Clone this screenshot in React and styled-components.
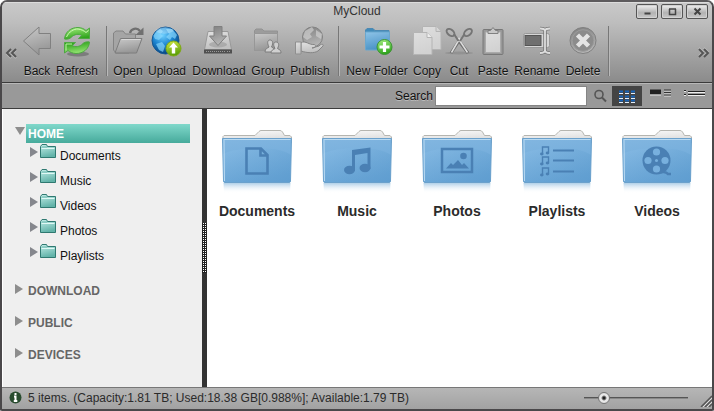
import React, { useState } from 'react';
import styled, { createGlobalStyle } from 'styled-components';

const GlobalStyle = createGlobalStyle`
  * { box-sizing: border-box; }
  body {
    margin: 0;
    background: #fff;
    font-family: "Liberation Sans", Arial, sans-serif;
    font-size: 12px;
    color: #111;
  }
  button, input {
    margin: 0;
    padding: 0;
    border: 0;
    font: inherit;
    color: inherit;
    background: none;
  }
  svg { display: block; flex-shrink: 0; }
`;

/* ---------- Window frame ---------- */

const Window = styled.div`
  display: flex;
  flex-direction: column;
  min-height: 100vh;
  border: 2px solid #4a484a;
  border-top-color: #5d5b5d;
  border-radius: 7px 7px 2px 2px;
  background: #999;
  overflow: hidden;
`;

const Header = styled.header`
  background: linear-gradient(#c9c9c9 0, #bebebe 20px, #8b8b8b 100%);
  border-bottom: 1px solid #3a3a3a;
  box-shadow: inset 0 1px 0 #dcdcdc;
`;

const TitleBar = styled.div`
  display: grid;
  grid-template-columns: 1fr auto 1fr;
  align-items: end;
  height: 18px;
  padding: 0 4px 1px;
`;

const Title = styled.h1`
  grid-column: 2;
  margin: 0;
  font-size: 12px;
  font-weight: 400;
  line-height: 16px;
  color: #333;
`;

const WindowControls = styled.div`
  display: flex;
  justify-content: flex-end;
  gap: 3px;
`;

const ControlButton = styled.button`
  display: grid;
  place-items: center;
  width: 22px;
  height: 15px;
  border: 1px solid #555;
  border-radius: 2px;
  background: linear-gradient(#f0f0f0, #b2b2b2 60%, #c8c8c8);
  box-shadow: inset 0 0 0 1px #d2d2d2;
`;

/* ---------- Toolbar ---------- */

const Toolbar = styled.div`
  display: flex;
  align-items: center;
  height: 62px;
  padding: 0 2px 0 3px;
`;

const ScrollButton = styled.button`
  display: grid;
  place-items: center;
  width: 12px;
  height: 20px;
  margin-top: 4px;
`;

const ToolGroup = styled.div`
  display: flex;
  gap: 4px;
  padding: 0 7px 0 6px;
  border-right: 1px solid #777;
  box-shadow: 1px 0 0 #b9b9b9;
  height: 50px;
`;

const Spacer = styled.div`
  flex: 1;
`;

const ToolButton = styled.button`
  display: flex;
  flex-direction: column;
  align-items: center;
  width: ${(p) => p.$width}px;
  margin-top: -1px;
  white-space: nowrap;
`;

const ToolLabel = styled.span`
  display: flex;
  justify-content: center;
  margin-top: 7px;
  line-height: 14px;
  text-shadow: 0 1px 0 #bbb;
`;

/* ---------- Search bar ---------- */

const SearchBar = styled.form`
  display: flex;
  align-items: center;
  justify-content: flex-end;
  height: 26px;
  padding-right: 2px;
  border-top: 1px solid #b8b8b8;
  border-bottom: 1px solid #3c3c3c;
  background: #999;
`;

const SearchLabel = styled.label`
  margin-right: 2px;
  text-shadow: 0 1px 0 #bbb;
`;

const SearchInput = styled.input`
  width: 152px;
  height: 20px;
  padding: 0 4px;
  border: 1px solid #858585;
  background: #fff;
`;

const SearchButton = styled.button`
  display: grid;
  place-items: center;
  width: 25px;
  height: 20px;
`;

const ViewModes = styled.div`
  display: flex;
  gap: 4px;
`;

const ViewButton = styled.button`
  display: grid;
  place-items: center;
  width: 30px;
  height: 20px;
  background: ${(p) => (p.$active ? '#444' : 'none')};
`;

/* ---------- Body ---------- */

const Body = styled.div`
  display: flex;
  flex: 1;
`;

const Sidebar = styled.nav`
  width: 200px;
  padding: 15px 12px 0 12px;
  background: #efefef;
  border-left: 1px solid #fff;
`;

const Section = styled.section`
  margin-bottom: 12px;
`;

const SectionHead = styled.button`
  display: flex;
  align-items: flex-start;
  width: 100%;
  height: 20px;
  text-align: left;
`;

const Arrow = styled.span`
  width: ${(p) => (p.$section ? 11 : 10)}px;
  padding-top: 3px;
`;

const SectionTitle = styled.span`
  flex: 1;
  height: 19px;
  padding-left: 2px;
  font-size: 12px;
  font-weight: 700;
  line-height: 20px;
  color: ${(p) => (p.$active ? '#fff' : '#666')};
  background: ${(p) => (p.$active ? 'linear-gradient(#80d8cb, #46aa9b)' : 'none')};
`;

const Tree = styled.ul`
  margin: 0;
  padding: 0 0 0 15px;
  list-style: none;
`;

const TreeItem = styled.button`
  display: flex;
  align-items: flex-start;
  width: 100%;
  height: 25px;
  text-align: left;
`;

const TreeLabel = styled.span`
  margin-left: 4px;
  line-height: 24px;
`;

const Splitter = styled.div`
  display: flex;
  align-items: center;
  width: 5px;
  background: #333;
  cursor: col-resize;
`;

const SplitterGrip = styled.div`
  width: 5px;
  height: 50px;
  background: conic-gradient(#fff 25%, #222 0) 0 0 / 2px 2px;
`;

const Content = styled.main`
  flex: 1;
  display: grid;
  grid-template-columns: repeat(auto-fill, 100px);
  align-content: start;
  padding-top: 20px;
  background: #fff;
`;

const FolderTile = styled.button`
  display: flex;
  flex-direction: column;
  align-items: center;
  height: 100px;
  font-size: 14px;
  font-weight: 700;
  line-height: 16px;
  color: #2b2b2b;
`;

const TileLabel = styled.span`
  margin-top: 8px;
`;

/* ---------- Status bar ---------- */

const StatusBar = styled.footer`
  display: flex;
  align-items: center;
  height: 22px;
  padding: 0 0 2px 7px;
  border-top: 1px solid #777;
  background: linear-gradient(#b6b6b6, #a2a2a2);
  color: #2b2b2b;
`;

const StatusText = styled.span`
  flex: 1;
  margin-left: 6px;
`;

const ZoomSlider = styled.input`
  appearance: none;
  width: 104px;
  height: 14px;
  margin-right: 12px;
  &::-webkit-slider-runnable-track {
    height: 2px;
    background: #555;
    border-bottom: 1px solid #888;
  }
  &::-webkit-slider-thumb {
    appearance: none;
    width: 12px;
    height: 12px;
    margin-top: -5px;
    border: 1px solid #777;
    border-radius: 50%;
    background: radial-gradient(circle, #222 0 1px, #eee 3px, #ddd 5px);
  }
`;

/* ---------- Drawings ---------- */

const Gradient = ({ id, from, to }) => (
  <linearGradient id={id} x1="0" y1="0" x2="0.3" y2="1">
    <stop offset="0" stopColor={from} />
    <stop offset="1" stopColor={to} />
  </linearGradient>
);

const Gradients = () => (
  <svg width="0" height="0" aria-hidden="true">
    <defs>
      <Gradient id="grey" from="#c9c9c9" to="#979797" />
      <Gradient id="silver" from="#e2e2e2" to="#c0c0c0" />
      <Gradient id="sheet" from="#dedede" to="#d2d2d2" />
      <Gradient id="steel" from="#7f7f7f" to="#b5b5b5" />
      <Gradient id="green" from="#a9f084" to="#31a51d" />
      <Gradient id="lime" from="#d9ec45" to="#5b9f08" />
      <Gradient id="sky" from="#8fc4e8" to="#4a93c6" />
      <Gradient id="teal" from="#c4eee9" to="#62b3a9" />
      <Gradient id="paper" from="#fbfbfb" to="#d9d9d9" />
      <Gradient id="folderBlue" from="#82b6e0" to="#6ea9d9" />
      <linearGradient id="gloss" x1="0" y1="0" x2="1" y2="1">
        <stop offset="0" stopColor="#8fc2ea" stopOpacity="0.4" />
        <stop offset="1" stopColor="#3c82bb" stopOpacity="0.3" />
      </linearGradient>
      <linearGradient id="reflection" x1="0" y1="0" x2="0" y2="1">
        <stop offset="0" stopColor="#9cc3e2" stopOpacity="0.8" />
        <stop offset="1" stopColor="#fff" stopOpacity="0" />
      </linearGradient>
      <radialGradient id="globe" cx="0.4" cy="0.3" r="0.7">
        <stop offset="0" stopColor="#6fd0ff" />
        <stop offset="0.55" stopColor="#1b83cf" />
        <stop offset="1" stopColor="#07437f" />
      </radialGradient>
    </defs>
  </svg>
);

const refreshArrow =
  'M4.5 14C5 7 11 2.4 18 2.5C21.5 2.6 24.3 4 26 5.5L29.5 3V13.5H18.5L21.8 10.4C19 8.6 14 9.2 11.6 12C9.7 14 7 14.5 4.5 14Z';

const toolDrawings = {
  Back: (
    <path d="M3.5 16L19 2V8.5H30.500V23.500H19V30Z" fill="url(#grey)" stroke="#808080" />
  ),
  Refresh: (
    <>
      <ellipse cx="18" cy="29" rx="11" ry="2.500" fill="#555" opacity="0.5" />
      <path d={refreshArrow} fill="url(#green)" stroke="#4fa843" />
      <path d={refreshArrow} fill="url(#green)" stroke="#4fa843" transform="rotate(180 17 15.500)" />
      <path d="M6.500 12C9 6.500 14 3.800 18 4C22 4.500 24 6 26 7.500L28.500 5.500" fill="none" stroke="#cbf8b4" />
      <path d="M6 25.500V19H12" fill="none" stroke="#bdf4a5" />
    </>
  ),
  Open: (
    <>
      <path d="M2.500 25V8L5 6H12L14.500 9H24.500V14L18 28H5Z" fill="#a5a5a5" stroke="#848484" />
      <path d="M9.500 13.500H31L25.500 28H4Z" fill="url(#grey)" stroke="#7c7c7c" />
      <path d="M10.500 14.500H29.500" stroke="#d8d8d8" />
      <path d="M19 8C20 3.500 26 2 29 6" fill="none" stroke="#707070" strokeWidth="2.400" />
      <path d="M32.500 2.500V10H24.500Z" fill="#707070" />
    </>
  ),
  Upload: (
    <>
      <circle cx="15.500" cy="15.500" r="13.500" fill="url(#globe)" stroke="#155894" />
      <path d="M5 8L10 4L13 6L11 9L13 11L9 15L5 14L3.500 11ZM16 4L22 4L27 10L25 14L22 12L20 15L16 12L19 9ZM6 19L12 17L15 21L13 27L9 25Z" fill="#8fdcff" opacity="0.65" />
      <path d="M5 6C10 1 20 1 24 6C19 9 11 10 5 6" fill="#fff" opacity="0.25" />
      <circle cx="23.500" cy="23.500" r="7.500" fill="url(#lime)" stroke="#7fa818" />
      <path d="M23.500 17.500L28 22.500H25.200V28.500H21.800V22.500H19Z" fill="#fff" />
    </>
  ),
  Download: (
    <>
      <path d="M6 6.500H26L29.500 24.500H2.500Z" fill="url(#silver)" stroke="#999" />
      <path d="M2 24.500H30V28.500H2Z" fill="#505050" />
      <path d="M4 26.500H23M25 26.500H28" stroke="#999" strokeDasharray="1 1" />
      <ellipse cx="16" cy="19.500" rx="9" ry="3" fill="#999" opacity="0.6" />
      <path d="M12 1.500H20V11H24.500L16 20.500L7.500 11H12Z" fill="url(#steel)" stroke="#808080" />
    </>
  ),
  Group: (
    <>
      <path d="M3.500 25.500V5.500L5 4H11L13 6H26.500V25.500Z" fill="#9c9c9c" stroke="#929292" />
      <path d="M3.500 8.500H26.500V25.500H3.500Z" fill="url(#grey)" stroke="#979797" />
      <g fill="#d0d0d0" stroke="#7c7c7c">
        <path d="M14 27C14 23.500 16 23.500 18 22C15.500 17 17 15 19 15S23 17 20.500 22C23 23.500 24 24 24 27Z" />
        <path d="M20 28C20 25 22 25 24 23.500C21.500 19 23 17 25 17S29 19 26.500 23.500C29 25 30 25 30 28Z" />
      </g>
    </>
  ),
  Publish: (
    <>
      <circle cx="19.500" cy="12" r="10" fill="url(#steel)" stroke="#828282" />
      <path d="M12 6L19 2L21 5L17 9L19 12L14 15L10 12ZM23 5L29 9L28 14L23 11Z" fill="#d3d3d3" opacity="0.65" />
      <path d="M8 17.500C13 15.500 16 20 21 19.500C24 20 23 23 19 23L26 21C28 18.500 31 19 30 21L25 26C21 28.500 14 28 8 26Z" fill="url(#silver)" stroke="#858585" />
      <path d="M2.500 17H8V29H2.500Z" fill="url(#silver)" stroke="#8f8f8f" />
    </>
  ),
  'New Folder': (
    <>
      <path d="M5.500 24.500V5L7 3.500H13L15 5.500H29V24.500Z" fill="#438bb9" stroke="#4c89b3" />
      <path d="M5.500 7H29.500V25H5.500Z" fill="url(#sky)" stroke="#6ba7cd" />
      <circle cx="24.500" cy="22" r="7.500" fill="url(#green)" stroke="#3c9433" />
      <path d="M24.500 17V27M19.500 22H29.500" stroke="#fff" strokeWidth="3.200" />
    </>
  ),
  Copy: (
    <g fill="url(#sheet)" stroke="#b4b4b4">
      <path d="M12.500 1.500H26L31 6.500V24.500H12.500Z" />
      <path d="M26 1.500V6.500H31" />
      <path d="M3.500 7.500H17L22 12.500V29.500H3.500Z" />
      <path d="M17 7.500V12.500H22" fill="#eee" />
    </g>
  ),
  Cut: (
    <>
      <ellipse cx="17" cy="28" rx="14" ry="1.500" fill="#777" opacity="0.4" />
      <path d="M17 16L26 28M17 16L9 28" stroke="#6e6e6e" strokeWidth="3" />
      <path d="M16 13L25.500 27.500M18 13L9.500 27.500" stroke="#dcdcdc" strokeWidth="1.500" />
      <g fill="none" stroke="#757575" strokeWidth="2">
        <ellipse cx="8.500" cy="7.500" rx="4.500" ry="2.800" transform="rotate(40 8.500 7.500)" />
        <ellipse cx="26" cy="7.500" rx="4.500" ry="2.800" transform="rotate(-40 26 7.500)" />
        <path d="M12 9L16.500 16M22.500 9L18 16" />
      </g>
    </>
  ),
  Paste: (
    <>
      <rect x="7" y="4.500" width="20" height="25" rx="1" fill="#999" stroke="#787878" />
      <path d="M9.500 7H24.500V27.500H9.500Z" fill="url(#sheet)" stroke="#aaa" />
      <path d="M12 8.500V5.500H14.500L17 2.500L19.500 5.500H22V8.500Z" fill="#c8c8c8" stroke="#808080" />
    </>
  ),
  Rename: (
    <>
      <rect x="3.500" y="8.500" width="26" height="14" rx="2" fill="#d6d6d6" stroke="#999" />
      <rect x="5" y="10.500" width="16" height="10" fill="#707070" stroke="#555" />
      <path d="M20 3.500C23 3.500 25 4 25 6V25C25 27 23 28 20 28M30 3.500C27 3.500 25 4 25 6V25C25 27 27 28 30 28" fill="none" stroke="#777" strokeWidth="3.500" />
      <path d="M20 3.500C23 3.500 25 4 25 6V25C25 27 23 28 20 28M30 3.500C27 3.500 25 4 25 6V25C25 27 27 28 30 28" fill="none" stroke="#ddd" strokeWidth="1.800" />
    </>
  ),
  Delete: (
    <>
      <circle cx="17" cy="15.500" r="13" fill="url(#steel)" stroke="#808080" />
      <circle cx="17" cy="15.500" r="10.800" fill="#8c8c8c" stroke="#9c9c9c" />
      <path d="M11.500 10L22.500 21M22.500 10L11.500 21" stroke="#e4e4e4" strokeWidth="4.500" />
    </>
  ),
};

const ToolIcon = ({ name }) => (
  <svg width="34" height="32" viewBox="0 0 34 32" aria-hidden="true">
    {toolDrawings[name]}
  </svg>
);

const Chevrons = ({ flip }) => (
  <svg width="12" height="12" viewBox="0 0 12 12" aria-hidden="true">
    <g transform={flip ? 'rotate(180 6 6)' : undefined} fill="none" strokeWidth="2">
      <path d="M6 3L2 7L6 11M11 3L7 7L11 11" stroke="#ccc" opacity="0.7" />
      <path d="M6 2L2 6L6 10M11 2L7 6L11 10" stroke="#555" />
    </g>
  </svg>
);

const controlDrawings = {
  Minimize: <path d="M2.500 7.500H8.500" strokeWidth="2" />,
  Maximize: <path d="M2 3H9M2.500 3V8.500H8.500V3" strokeWidth="1.500" />,
  Close: <path d="M2.500 2.500L8.500 8.500M8.500 2.500L2.500 8.500" strokeWidth="2" />,
};

const Triangle = ({ down, color }) => (
  <svg width="10" height="10" viewBox="0 0 10 10" aria-hidden="true">
    <path d={down ? 'M0 0H10L5 8Z' : 'M0 0V10L8 5Z'} fill={color || '#8d8d8d'} />
  </svg>
);

const SmallFolder = () => (
  <svg width="16" height="16" viewBox="0 0 16 16" aria-hidden="true">
    <path d="M0.500 13.500V2.500L2 0.500H6.500L7.500 2.500H15.500V13.500Z" fill="url(#teal)" stroke="#2f7971" />
    <path d="M1.500 4.500H14.500" stroke="#e0f8f5" />
    <path d="M1.500 3H7" stroke="#6fb9b0" />
  </svg>
);

const MiniNote = ({ y }) => (
  <g transform={`translate(19 ${y})`}>
    <path d="M2.500 7.500V1H8.500V6.500" fill="none" stroke="#4a80b4" strokeWidth="1.400" />
    <ellipse cx="1.800" cy="8" rx="1.800" ry="1.400" fill="#4a80b4" />
    <ellipse cx="7.500" cy="7" rx="1.800" ry="1.400" fill="#4a80b4" />
  </g>
);

const folderGlyphs = {
  Documents: (
    <path d="M25.500 19.500H40L46.500 26V44.500H25.500ZM39.500 20V26.500H46" fill="none" stroke="#4a80b4" strokeWidth="2.600" />
  ),
  Music: (
    <g fill="#4a80b4">
      <path d="M31 21L49.500 18.500V40H46.500V24L34 26V42H31Z" />
      <ellipse cx="28.500" cy="41" rx="5.500" ry="4.200" />
      <ellipse cx="44" cy="39" rx="5.500" ry="4.200" />
    </g>
  ),
  Photos: (
    <g fill="#4a80b4">
      <rect x="21" y="20" width="30" height="23" fill="none" stroke="#4a80b4" strokeWidth="2.500" />
      <circle cx="42.500" cy="27" r="3.300" />
      <path d="M25 39.500L30 34L32 36L37 31L41 36L43 34L48 39.500Z" />
    </g>
  ),
  Playlists: (
    <>
      <MiniNote y={17} />
      <MiniNote y={27} />
      <MiniNote y={38} />
      <path d="M32 21.500H53M32 31.500H53M32 42.500H53" stroke="#4a80b4" strokeWidth="2" />
    </>
  ),
  Videos: (
    <>
      <path d="M40 43C43 43 45 42 47 45H50" fill="none" stroke="#4a80b4" strokeWidth="2.500" />
      <circle cx="35.500" cy="31.500" r="14" fill="#4a80b4" />
      <g fill="#78b0de">
        <circle cx="35.500" cy="23" r="3.600" />
        <circle cx="35.500" cy="40" r="3.600" />
        <circle cx="27" cy="31.500" r="3.600" />
        <circle cx="44" cy="31.500" r="3.600" />
        <circle cx="35.500" cy="31.500" r="1.500" />
      </g>
    </>
  ),
};

const BigFolder = ({ name }) => (
  <svg width="72" height="66" viewBox="0 0 72 66" aria-hidden="true">
    <path d="M2 12V7.500L3 6.500H34L38 2.500Q39 1.500 40 1.500H59Q60.500 1.500 61.500 3L63.500 6.500H69L70.500 8V14H2Z" fill="url(#paper)" stroke="#b5b5b0" />
    <path d="M2.500 54H69.500L69 64H3Z" fill="url(#reflection)" />
    <path d="M1.500 9.500H70.500L69.500 52Q69.500 53.500 68 53.500H4Q2.500 53.500 2.500 52Z" fill="url(#folderBlue)" stroke="#6ba1cc" />
    <path d="M2 25C14 18 56 16 70 26L69 53H3Z" fill="url(#gloss)" />
    <path d="M2.500 10.500H69.500M3 11L3.500 52" stroke="#b9daf2" fill="none" />
    {folderGlyphs[name]}
  </svg>
);

const SearchIcon = () => (
  <svg width="14" height="14" viewBox="0 0 14 14" aria-hidden="true">
    <circle cx="6" cy="5.500" r="4" fill="none" stroke="#555" strokeWidth="1.600" />
    <path d="M9 8.500L13 12.500" stroke="#555" strokeWidth="2" />
  </svg>
);

const viewDrawings = {
  Icons: (
    <>
      <path d="M3 4.500H19M3 9.500H19M3 13.500H19" stroke="#1762b5" strokeWidth="2" strokeDasharray="4 2" />
      <path d="M3 6.500H19M3 11.500H19M3 15.500H19" stroke="#e6eef8" strokeDasharray="4 2" />
    </>
  ),
  Details: (
    <>
      <path d="M0 2.500H11V7.500H0Z" fill="#222" />
      <path d="M0 8H11M14 4H21M14 7H21M14 9H21" stroke="#e5e5e5" />
      <path d="M14 3H21M14 5.500H21M14 8H21" stroke="#333" />
    </>
  ),
  List: (
    <>
      <path d="M0 3.500H2M4 4.500H21M0 7.500H2M4 7.500H21" stroke="#222" />
      <path d="M0 4.500H2M4 5.500H21M0 8.500H2M4 8.500H21" stroke="#eee" />
    </>
  ),
};

const InfoIcon = () => (
  <svg width="13" height="13" viewBox="0 0 13 13" aria-hidden="true">
    <circle cx="6.500" cy="6.500" r="6" fill="#294c2f" />
    <path d="M6.500 2V4M5 5.500H6.500V10M4.800 10H8.300" fill="none" stroke="#fff" strokeWidth="2" />
  </svg>
);

const ResizeGrip = () => (
  <svg width="12" height="19" viewBox="0 0 12 19" aria-hidden="true">
    <path d="M1 19L12 8M5 19L12 12M9 19L12 16" stroke="#555" strokeWidth="1.500" />
    <path d="M3 19L12 10M7 19L12 14" stroke="#ddd" />
  </svg>
);

/* ---------- Data ---------- */

const toolGroups = [
  [['Back', 28], ['Refresh', 44]],
  [['Open', 30], ['Upload', 40], ['Download', 56], ['Group', 34], ['Publish', 42]],
  [['New Folder', 64], ['Copy', 28], ['Cut', 28], ['Paste', 32], ['Rename', 48], ['Delete', 36]],
];
const treeItems = ['Documents', 'Music', 'Videos', 'Photos', 'Playlists'];
const closedSections = ['DOWNLOAD', 'PUBLIC', 'DEVICES'];
const folders = ['Documents', 'Music', 'Photos', 'Playlists', 'Videos'];

export default function App() {
  const [view, setView] = useState('Icons');
  const [zoom, setZoom] = useState(15);

  return (
    <>
      <GlobalStyle />
      <Window>
        <Header>
          <TitleBar>
            <Title>MyCloud</Title>
            <WindowControls>
              {Object.keys(controlDrawings).map((name) => (
                <ControlButton key={name} aria-label={name}>
                  <svg width="11" height="11" viewBox="0 0 11 11" fill="none" stroke="#444" aria-hidden="true">
                    {controlDrawings[name]}
                  </svg>
                </ControlButton>
              ))}
            </WindowControls>
          </TitleBar>
          <Toolbar>
            <ScrollButton aria-label="Scroll left"><Chevrons /></ScrollButton>
            {toolGroups.map((group) => (
              <ToolGroup key={group[0][0]}>
                {group.map(([name, width]) => (
                  <ToolButton key={name} $width={width}>
                    <ToolIcon name={name} />
                    <ToolLabel>{name}</ToolLabel>
                  </ToolButton>
                ))}
              </ToolGroup>
            ))}
            <Spacer />
            <ScrollButton aria-label="Scroll right"><Chevrons flip /></ScrollButton>
          </Toolbar>
        </Header>

        <SearchBar role="search" onSubmit={(e) => e.preventDefault()}>
          <SearchLabel htmlFor="search">Search</SearchLabel>
          <SearchInput id="search" type="text" />
          <SearchButton type="submit" aria-label="Find"><SearchIcon /></SearchButton>
          <ViewModes>
            {Object.keys(viewDrawings).map((name) => (
              <ViewButton
                key={name}
                type="button"
                aria-label={name}
                aria-pressed={view === name}
                $active={view === name}
                onClick={() => setView(name)}
              >
                <svg width="22" height="18" viewBox="0 0 22 18" aria-hidden="true">
                  {viewDrawings[name]}
                </svg>
              </ViewButton>
            ))}
          </ViewModes>
        </SearchBar>

        <Body>
          <Sidebar>
            <Section>
              <SectionHead aria-expanded="true">
                <Arrow $section><Triangle down /></Arrow>
                <SectionTitle $active>HOME</SectionTitle>
              </SectionHead>
              <Tree>
                {treeItems.map((name) => (
                  <li key={name}>
                    <TreeItem>
                      <Arrow><Triangle color="#85878d" /></Arrow>
                      <SmallFolder />
                      <TreeLabel>{name}</TreeLabel>
                    </TreeItem>
                  </li>
                ))}
              </Tree>
            </Section>
            {closedSections.map((name) => (
              <Section key={name}>
                <SectionHead aria-expanded="false">
                  <Arrow $section><Triangle /></Arrow>
                  <SectionTitle>{name}</SectionTitle>
                </SectionHead>
              </Section>
            ))}
          </Sidebar>
          <Splitter role="separator" aria-orientation="vertical"><SplitterGrip /></Splitter>
          <Content>
            {folders.map((name) => (
              <FolderTile key={name}>
                <BigFolder name={name} />
                <TileLabel>{name}</TileLabel>
              </FolderTile>
            ))}
          </Content>
        </Body>

        <StatusBar>
          <InfoIcon />
          <StatusText>5 items. (Capacity:1.81 TB; Used:18.38 GB[0.988%]; Available:1.79 TB)</StatusText>
          <ZoomSlider
            type="range"
            aria-label="Icon size"
            value={zoom}
            onChange={(e) => setZoom(Number(e.target.value))}
          />
          <ResizeGrip />
        </StatusBar>
      </Window>
      <Gradients />
    </>
  );
}
